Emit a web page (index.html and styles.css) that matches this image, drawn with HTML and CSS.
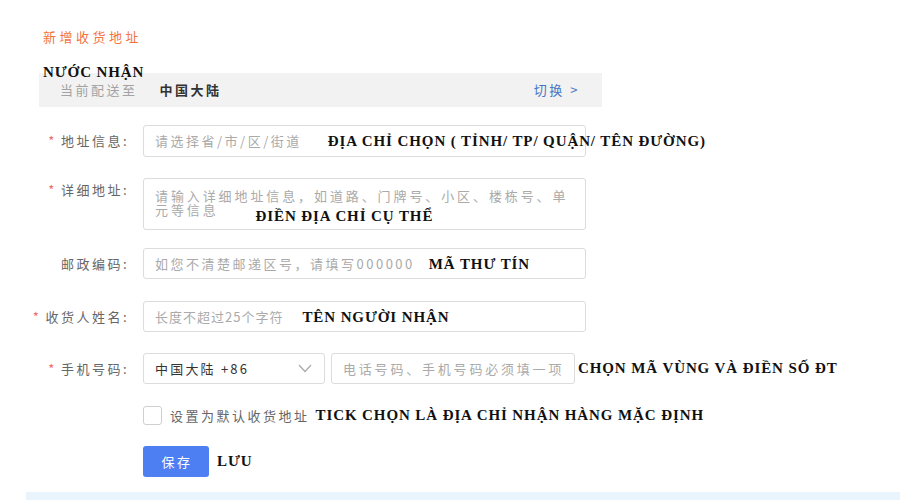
FILE: index.html
```html
<!DOCTYPE html>
<html lang="zh-CN">
<head>
<meta charset="utf-8">
<title>新增收货地址</title>
<link rel="stylesheet" href="styles.css">
</head>
<body>
<div class="page">
  <div class="title">新增收货地址</div>
  <div class="country">
    <span class="note note-country">NƯỚC NHẬN</span>
    <span class="country-label">当前配送至</span>
    <span class="country-name">中国大陆</span>
    <span class="switch">切换 &gt;</span>
  </div>
  <div class="form">
    <div class="row row-area">
      <label class="lbl"><i class="req">*</i>地址信息:</label>
      <div class="box box-area"><span class="ph ph-wide">请选择省/市/区/街道</span><span class="note note-area">ĐỊA CHỈ CHỌN ( TỈNH/ TP/ QUẬN/ TÊN ĐƯỜNG)</span></div>
    </div>
    <div class="row row-detail">
      <label class="lbl lbl-top"><i class="req">*</i>详细地址:</label>
      <div class="box box-detail"><span class="ph-line">请输入详细地址信息，如道路、门牌号、小区、楼栋号、单</span><span class="ph-line">元等信息<span class="note note-detail">ĐIỀN ĐỊA CHỈ CỤ THỂ</span></span></div>
    </div>
    <div class="row row-zip">
      <label class="lbl">邮政编码:</label>
      <div class="box box-zip"><span class="ph">如您不清楚邮递区号，请填写000000</span><span class="note note-zip">MÃ THƯ TÍN</span></div>
    </div>
    <div class="row row-name">
      <label class="lbl"><i class="req">*</i>收货人姓名:</label>
      <div class="box box-name"><span class="ph ph-tight">长度不超过25个字符</span><span class="note note-name">TÊN NGƯỜI NHẬN</span></div>
    </div>
    <div class="row row-phone">
      <label class="lbl"><i class="req">*</i>手机号码:</label>
      <div class="box box-select"><span class="val">中国大陆 +86</span><svg class="chev" width="14" height="9" viewBox="0 0 14 9"><polyline points="1,1 7,7.5 13,1" fill="none" stroke="#a8a8a8" stroke-width="1.2"/></svg></div>
      <div class="box box-phone"><span class="ph">电话号码、手机号码必须填一项</span></div>
      <span class="note note-phone">CHỌN MÃ VÙNG VÀ ĐIỀN SỐ ĐT</span>
    </div>
    <div class="row row-check">
      <span class="lbl"></span>
      <span class="checkbox"></span>
      <span class="check-text">设置为默认收货地址</span>
      <span class="note note-check">TICK CHỌN LÀ ĐỊA CHỈ NHẬN HÀNG MẶC ĐỊNH</span>
    </div>
    <div class="row row-save">
      <span class="lbl"></span>
      <button class="btn">保存</button>
      <span class="note note-save">LƯU</span>
    </div>
  </div>
  <div class="strip"></div>
</div>
</body>
</html>
```

FILE: styles.css
```css
* { box-sizing: border-box; }
html, body { margin: 0; padding: 0; overflow: hidden; background: #fff; }
body {
  font-family: "Noto Sans CJK SC", sans-serif;
  font-size: 13px;
  color: #666;
  letter-spacing: 2.5px;
}
.page { display: flex; flex-direction: column; width: 900px; height: 500px; }

.title {
  margin: 30px 0 0 43px;
  line-height: 14px;
  color: #f0743c;
  letter-spacing: 3.5px;
}

.country {
  position: relative;
  margin: 29px 0 0 39px;
  width: 563px;
  height: 34px;
  background: #f2f2f2;
  display: flex;
  align-items: center;
  padding: 0 22px 0 21px;
  line-height: 14px;
}
.country-label { color: #a3a3a3; }
.country-name { margin-left: 22px; color: #333; font-weight: 700; }
.switch { margin-left: auto; color: #4577c4; }

.note {
  font-family: "Liberation Serif", "Times New Roman", serif;
  font-weight: 700;
  font-size: 15px;
  letter-spacing: 0.9px;
  color: #111;
  white-space: nowrap;
  flex-shrink: 0;
}
.note-country {
  position: absolute;
  left: 4px;
  top: -8px;
  line-height: 14px;
}

.form { display: flex; flex-direction: column; margin-top: 18px; }
.row { display: flex; align-items: center; }
.row-area { height: 32px; }
.row-detail { height: 52px; margin-top: 21px; align-items: flex-start; }
.row-zip { height: 31px; margin-top: 18px; }
.row-name { height: 31px; margin-top: 22px; }
.row-phone { height: 31px; margin-top: 21px; }
.row-check { height: 19px; margin-top: 22px; }
.row-save { height: 31px; margin-top: 21px; }

.lbl {
  flex: 0 0 129px;
  margin-right: 14px;
  text-align: right;
  line-height: 16px;
  color: #666;
}
.lbl-top { padding-top: 4px; }
.req { font-style: normal; color: #f26d6d; margin-right: 4px; }

.box {
  flex-shrink: 0;
  height: 100%;
  border: 1px solid #dcdcdc;
  border-radius: 3px;
  background: #fff;
  display: flex;
  align-items: center;
  padding: 0 11px;
  line-height: 16px;
  white-space: nowrap;
}
.box-area, .box-detail, .box-zip, .box-name { width: 443px; }
.box-detail {
  flex-direction: column;
  align-items: flex-start;
  padding: 10px 11px 0;
}
.ph, .ph-line { color: #aaa; white-space: nowrap; }
.ph-line { letter-spacing: 2.9px; line-height: 14px; }
.ph-wide { letter-spacing: 2.5px; }
.ph-tight { letter-spacing: 1px; }

.note-area { margin-left: 26px; }
.note-detail { margin-left: 37px; line-height: 14px; vertical-align: -6px; }
.note-zip { margin-left: 14px; }
.note-name { margin-left: 19px; }

.box-select { width: 182px; padding: 0 12px 0 11px; }
.box-select .val { color: #333; letter-spacing: 2.2px; }
.chev { margin-left: auto; display: block; }
.box-phone { width: 244px; margin-left: 6px; }
.box-phone .ph { letter-spacing: 2.8px; }
.note-phone { margin-left: 3px; }

.checkbox {
  flex-shrink: 0;
  width: 19px;
  height: 19px;
  border: 1px solid #cfcfcf;
  border-radius: 3px;
  background: #fff;
}
.check-text { margin-left: 8px; color: #666; line-height: 16px; white-space: nowrap; }
.note-check { margin-left: 6px; }

.btn {
  flex-shrink: 0;
  width: 66px;
  height: 31px;
  border: 0;
  border-radius: 3px;
  background: #4d7ef2;
  color: #fff;
  font-family: "Noto Sans CJK SC", sans-serif;
  font-size: 13px;
  letter-spacing: 2.5px;
  padding: 0 0 0 2px;
}
.note-save { margin-left: 8px; }

.strip {
  margin: 15px 0 0 26px;
  height: 8px;
  background: #eaf4fd;
}
```
